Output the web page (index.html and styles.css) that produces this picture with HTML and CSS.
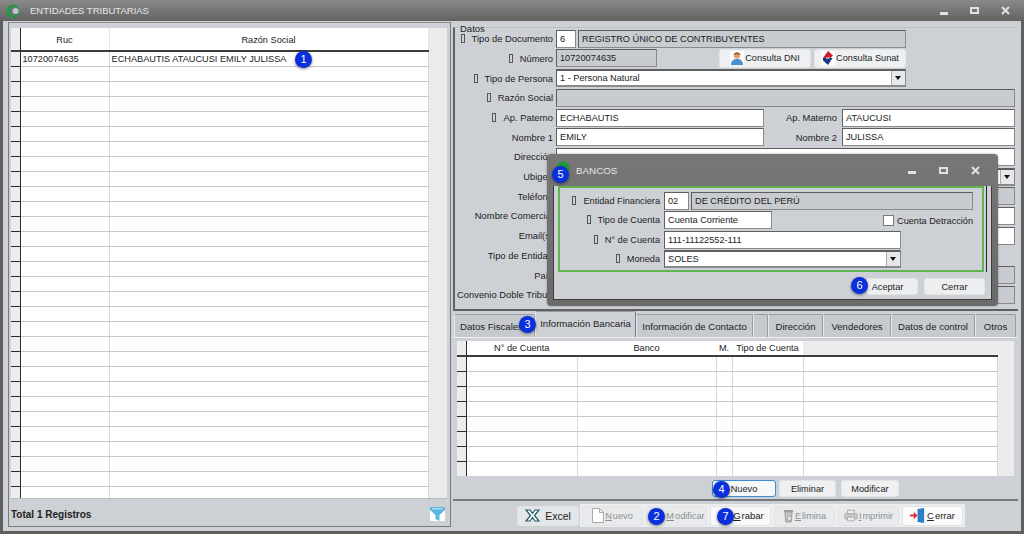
FILE: index.html
```html
<!DOCTYPE html>
<html lang="en">
<head>
    <meta charset="UTF-8">
    <meta name="viewport" content="width=device-width, initial-scale=1.0">
    <title>Entidades Tributarias</title>
    <link rel="stylesheet" href="styles.css">
</head>
<body>
    <div class="window">
        <div class="titlebar">
            <svg class="logo" width="14" height="14" viewBox="0 0 16 16"><circle cx="8" cy="8" r="7.500" fill="#1f9a3c"/><circle cx="9.500" cy="8" r="5" fill="#6d7378"/><circle cx="11" cy="8" r="3.500" fill="#bfc3c7"/></svg>
            <span class="title">ENTIDADES TRIBUTARIAS</span>
            <div class="win-controls">
                <span class="ctl-min"></span>
                <span class="ctl-max"></span>
                <svg width="9" height="9" viewBox="0 0 9 9"><path d="M1 1l7 7M8 1L1 8" stroke="#dfe1e3" stroke-width="2"/></svg>
            </div>
        </div>

        <div class="content">
            <div class="left-panel">
                <div class="grid left-grid">
                    <table>
                        <colgroup><col class="c-ind"><col class="c-ruc"><col class="c-razon"></colgroup>
                        <thead><tr><th></th><th>Ruc</th><th>Razón Social</th></tr></thead>
                        <tbody>
                            <tr><td></td><td>10720074635</td><td>ECHABAUTIS ATAUCUSI EMILY JULISSA</td></tr>
                            <tr><td></td><td></td><td></td></tr>
                            <tr><td></td><td></td><td></td></tr>
                            <tr><td></td><td></td><td></td></tr>
                            <tr><td></td><td></td><td></td></tr>
                            <tr><td></td><td></td><td></td></tr>
                            <tr><td></td><td></td><td></td></tr>
                            <tr><td></td><td></td><td></td></tr>
                            <tr><td></td><td></td><td></td></tr>
                            <tr><td></td><td></td><td></td></tr>
                            <tr><td></td><td></td><td></td></tr>
                            <tr><td></td><td></td><td></td></tr>
                            <tr><td></td><td></td><td></td></tr>
                            <tr><td></td><td></td><td></td></tr>
                            <tr><td></td><td></td><td></td></tr>
                            <tr><td></td><td></td><td></td></tr>
                            <tr><td></td><td></td><td></td></tr>
                            <tr><td></td><td></td><td></td></tr>
                            <tr><td></td><td></td><td></td></tr>
                            <tr><td></td><td></td><td></td></tr>
                            <tr><td></td><td></td><td></td></tr>
                            <tr><td></td><td></td><td></td></tr>
                            <tr><td></td><td></td><td></td></tr>
                            <tr><td></td><td></td><td></td></tr>
                            <tr><td></td><td></td><td></td></tr>
                            <tr><td></td><td></td><td></td></tr>
                            <tr><td></td><td></td><td></td></tr>
                            <tr><td></td><td></td><td></td></tr>
                            <tr><td></td><td></td><td></td></tr>
                            <tr><td></td><td></td><td></td></tr>
                        </tbody>
                    </table>
                </div>
                <div class="left-footer">
                    <span class="total">Total 1 Registros</span>
                    <svg width="15" height="14" viewBox="0 0 15 14"><rect width="15" height="14" fill="#fff"/><path d="M0 0h15v3L9.500 8v6l-4-2V8L0 3z" fill="#5cb6e0"/><path d="M2 1h11v1.500H2z" fill="#a6dcf3"/></svg>
                </div>
            </div>

            <div class="right-panel">
                <fieldset class="datos">
                    <legend>Datos</legend>
                    <div class="row">
                        <label><i class="mark"></i>Tipo de Documento</label>
                        <span class="input code">6</span>
                        <span class="input ro desc-doc">REGISTRO ÚNICO DE CONTRIBUYENTES</span>
                    </div>
                    <div class="row">
                        <label><i class="mark"></i>Número</label>
                        <span class="input ro num">10720074635</span>
                        <button class="btn btn-dni">
                            <svg width="14" height="14" viewBox="0 0 14 14"><rect width="14" height="14" fill="#fff"/><circle cx="7" cy="4.500" r="3.200" fill="#e0a070"/><path d="M3.500 4C4 .5 10 .5 10.500 4 8 3 6 3 3.500 4z" fill="#8a5a30"/><path d="M1 14c0-5 3-6 6-6s6 1 6 6z" fill="#4a90d0"/></svg>Consulta DNI</button>
                        <button class="btn btn-sunat">
                            <svg width="14" height="14" viewBox="0 0 14 14"><rect width="14" height="14" fill="#fff"/><path d="M7 0l5 4.500-2.500 2.500H2z" fill="#c8202a"/><path d="M2 7h9.500L7 14 2 9.500z" fill="#1c3a80"/><path d="M5 6.500h4l-1 1H5z" fill="#fff"/></svg>Consulta Sunat</button>
                    </div>
                    <div class="row">
                        <label><i class="mark"></i>Tipo de Persona</label>
                        <span class="input select desc-doc">1 - Persona Natural<b class="arrow"></b></span>
                    </div>
                    <div class="row">
                        <label><i class="mark"></i>Razón Social</label>
                        <span class="input ro grow"></span>
                    </div>
                    <div class="row">
                        <label><i class="mark"></i>Ap. Paterno</label>
                        <span class="input half">ECHABAUTIS</span>
                        <label class="label-2">Ap. Materno</label>
                        <span class="input grow">ATAUCUSI</span>
                    </div>
                    <div class="row">
                        <label>Nombre 1</label>
                        <span class="input half">EMILY</span>
                        <label class="label-2">Nombre 2</label>
                        <span class="input grow">JULISSA</span>
                    </div>
                    <div class="row">
                        <label>Dirección</label>
                        <span class="input grow"></span>
                    </div>
                    <div class="row">
                        <label>Ubigeo</label>
                        <span class="input select grow"><b class="arrow"></b></span>
                    </div>
                    <div class="row">
                        <label>Teléfono</label>
                        <span class="input ro grow"></span>
                    </div>
                    <div class="row">
                        <label>Nombre Comercial</label>
                        <span class="input grow"></span>
                    </div>
                    <div class="row">
                        <label>Email(s)</label>
                        <span class="input grow"></span>
                    </div>
                    <div class="row">
                        <label>Tipo de Entidad</label>
                    </div>
                    <div class="row">
                        <label>País</label>
                        <span class="input ro grow"></span>
                    </div>
                    <div class="row">
                        <label class="label-long">Convenio Doble Tributación</label>
                        <span class="input ro grow"></span>
                    </div>
                </fieldset>

                <div class="tabs">
                    <span class="tab tab-fiscal">Datos Fiscales</span>
                    <span class="tab active tab-banco">Información Bancaria</span>
                    <span class="tab tab-contacto">Información de Contacto</span>
                    <span class="tab tab-blank"></span>
                    <span class="tab tab-dir">Dirección</span>
                    <span class="tab tab-vend">Vendedores</span>
                    <span class="tab tab-control">Datos de control</span>
                    <span class="tab tab-otros">Otros</span>
                </div>
                <div class="tab-panel">
                    <div class="grid bank-grid">
                        <table>
                            <colgroup><col class="b-ind"><col class="b-cuenta"><col class="b-banco"><col class="b-m"><col class="b-tipo"><col></colgroup>
                            <thead><tr><th></th><th>N° de Cuenta</th><th>Banco</th><th>M.</th><th>Tipo de Cuenta</th><th class="th-empty"></th></tr></thead>
                            <tbody>
                                <tr><td></td><td></td><td></td><td></td><td></td><td></td></tr>
                                <tr><td></td><td></td><td></td><td></td><td></td><td></td></tr>
                                <tr><td></td><td></td><td></td><td></td><td></td><td></td></tr>
                                <tr><td></td><td></td><td></td><td></td><td></td><td></td></tr>
                                <tr><td></td><td></td><td></td><td></td><td></td><td></td></tr>
                                <tr><td></td><td></td><td></td><td></td><td></td><td></td></tr>
                                <tr><td></td><td></td><td></td><td></td><td></td><td></td></tr>
                                <tr><td></td><td></td><td></td><td></td><td></td><td></td></tr>
                            </tbody>
                        </table>
                    </div>
                </div>
                <div class="bank-actions">
                    <button class="btn btn-focus">Nuevo</button>
                    <button class="btn">Eliminar</button>
                    <button class="btn btn-mod">Modificar</button>
                </div>
                <div class="toolbar">
                    <button class="btn tool tool-excel">
                        <svg width="15" height="13" viewBox="0 0 15 13"><path d="M1 1h4l2.500 3.500L10 1h4L9.500 6.500 14 12h-4L7.500 8.500 5 12H1l4.500-5.500z" fill="#fff" stroke="#1c5a6a" stroke-width="1.200"/></svg>Excel</button>
                    <div class="tool-group">
                        <button class="btn tool off">
                            <svg width="12" height="15" viewBox="0 0 12 15"><path d="M.5.5h7l4 4v10H.5z" fill="#fff" stroke="#a8a8a8"/><path d="M7.500.5v4h4" fill="none" stroke="#a8a8a8"/></svg><u>N</u>uevo</button>
                        <button class="btn tool off tool-mod"><u>M</u>odificar</button>
                        <button class="btn tool tool-grabar"><u>G</u>rabar</button>
                        <button class="btn tool off">
                            <svg width="11" height="14" viewBox="0 0 12 15"><path d="M2 3h8l-1 11H3z" fill="#c4c4c4" stroke="#999"/><path d="M1 2h10" stroke="#999" stroke-width="2"/><circle cx="7" cy="10" r="2.500" fill="#e8e8e8" stroke="#999"/></svg><u>E</u>limina</button>
                        <button class="btn tool off">
                            <svg width="14" height="13" viewBox="0 0 16 14"><path d="M4 1h8v4H4z" fill="#eee" stroke="#aaa"/><path d="M1 5h14v6H1z" fill="#c8c8c8" stroke="#aaa"/><path d="M4 9h8v4H4z" fill="#eee" stroke="#aaa"/></svg><u>I</u>mprimir</button>
                        <button class="btn tool tool-close">
                            <svg width="16" height="15" viewBox="0 0 17 16"><path d="M8 1l7-1v16l-7-1z" fill="#2a7fc8"/><path d="M0 7h4V4l4 4-4 4V9H0z" fill="#e0303a"/></svg><u>C</u>errar</button>
                    </div>
                </div>
            </div>
        </div>
    </div>

    <!-- ventana flotante -->
    <div class="dialog">
        <div class="dialog-title">
            <svg class="dialog-logo" width="14" height="14" viewBox="0 0 16 16"><circle cx="8" cy="8" r="7.500" fill="#1f9a3c"/></svg>
            <span class="title">BANCOS</span>
            <div class="win-controls">
                <span class="ctl-min"></span>
                <span class="ctl-max"></span>
                <svg width="9" height="9" viewBox="0 0 9 9"><path d="M1 1l7 7M8 1L1 8" stroke="#dfe1e3" stroke-width="2"/></svg>
            </div>
        </div>
        <div class="dialog-body">
            <div class="dialog-form">
                <div class="drow">
                    <label><i class="mark"></i>Entidad Financiera</label>
                    <span class="input dcode">02</span>
                    <span class="input ro ddesc">DE CRÉDITO DEL PERÚ</span>
                </div>
                <div class="drow">
                    <label><i class="mark"></i>Tipo de Cuenta</label>
                    <span class="input dtipo">Cuenta Corriente</span>
                    <span class="check"><i class="box"></i>Cuenta Detracción</span>
                </div>
                <div class="drow">
                    <label><i class="mark"></i>N° de Cuenta</label>
                    <span class="input dwide">111-11122552-111</span>
                </div>
                <div class="drow">
                    <label><i class="mark"></i>Moneda</label>
                    <span class="input select dwide">SOLES<b class="arrow"></b></span>
                </div>
            </div>
            <div class="dialog-actions">
                <button class="btn btn-acc">Aceptar</button>
                <button class="btn btn-acc2">Cerrar</button>
            </div>
        </div>
    </div>

    <span class="badge b1">1</span>
    <span class="badge b2">2</span>
    <span class="badge b3">3</span>
    <span class="badge b4">4</span>
    <span class="badge b5">5</span>
    <span class="badge b6">6</span>
    <span class="badge b7">7</span>
</body>
</html>
```

FILE: styles.css
```css
* {
    box-sizing: border-box;
}
body {
    margin: 0;
    width: 1024px;
    height: 534px;
    overflow: hidden;
    background: #5f5f5f;
    font-family: "Liberation Sans", Arial, sans-serif;
    font-size: 9.2px;
    color: #222;
}
.window {
    display: flex;
    flex-direction: column;
    height: 100%;
}
.titlebar {
    display: flex;
    align-items: center;
    height: 22px;
    padding: 0 0 0 6px;
    background: linear-gradient(#8a8a8a, #626262);
}
.title {
    margin-left: 10px;
    font-size: 9.500px;
    color: #e4e6e8;
}
.win-controls {
    display: flex;
    align-items: center;
    gap: 23px;
    margin-left: auto;
    margin-right: 13px;
}
.titlebar .win-controls {
    gap: 22px;
    margin-right: 14px;
}
.ctl-min {
    width: 8px;
    height: 3px;
    margin-top: 5px;
    background: #dfe1e3;
}
.ctl-max {
    width: 9px;
    height: 7px;
    border: 2px solid #dfe1e3;
}
.content {
    flex: 1;
    display: flex;
    gap: 2px;
    margin: 0 3px 3px;
    padding: 1px 3px 4px 5px;
    background: #cdd0d5;
}

/* grids */
.grid table {
    border-collapse: collapse;
    table-layout: fixed;
}
.grid th {
    background: #fff;
    font-weight: normal;
    font-size: 9.2px;
    padding: 2px 0 0;
    border-bottom: 2px solid #3c3c3c;
    border-right: 1px solid #e6e6e6;
}
.grid th:first-child,
.grid td:first-child {
    background: #ededed;
    border-right: 1px solid #2b2b2b;
}
.grid td {
    padding: 0 0 0 2px;
    background: #fff;
    border-bottom: 1px solid #c8c8c8;
    border-right: 1px solid #d8d8d8;
    white-space: nowrap;
    overflow: hidden;
}
.grid td:first-child {
    border-bottom: 1px solid #2b2b2b;
}
.left-panel {
    display: flex;
    flex-direction: column;
    width: 443px;
    padding: 5px 3px 0 2px;
    border: 1px solid #77797c;
    border-top: 1px solid #8c8e91;
}
.left-grid {
    height: 471px;
    background: #ebebeb;
    border-bottom: 1px solid #bbb;
    overflow: hidden;
}
.left-grid table {
    width: 417px;
}
.left-grid th {
    height: 23px;
}
.left-grid td {
    height: 15px;
}
.c-ind {
    width: 9px;
}
.c-ruc {
    width: 89px;
}
.c-razon {
    width: 319px;
}
.left-footer {
    flex: 1;
    display: flex;
    align-items: center;
    justify-content: space-between;
    padding: 3px 2px 0 0;
}
.total {
    font-size: 10px;
    font-weight: bold;
}

/* datos */
.right-panel {
    flex: 1;
    min-width: 0;
    display: flex;
    flex-direction: column;
}
.datos {
    margin: 0;
    padding: 0 3px 0 2px;
    height: 289px;
    border: 2px solid #5f6165;
    border-width: 1px 0 2px 2px;
    border-top-color: #bcbfc3;
}
.datos legend {
    margin: 0 0 -3px 2px;
    padding: 3px 1px 0;
    font-size: 9.500px;
    line-height: 8px;
}
.row {
    display: flex;
    align-items: center;
    height: 17.500px;
    margin-bottom: 2.200px;
    font-size: 9.400px;
}
.row .input {
    font-size: 9.2px;
}
.row label {
    width: 96px;
    flex: none;
    margin-right: 3px;
    text-align: right;
    white-space: nowrap;
}
.row .label-2 {
    width: 73px;
    margin-right: 5px;
}
.row .label-long {
    text-align: left;
}
.mark {
    display: inline-block;
    width: 4px;
    height: 9px;
    margin-right: 7px;
    border: 1px solid #555;
    vertical-align: -1px;
}
.input {
    display: flex;
    align-items: center;
    height: 18px;
    padding-left: 3px;
    background: #fff;
    border: 1px solid #5e5e5e;
    border-right-color: #8a8a8a;
    border-bottom-color: #8a8a8a;
    white-space: nowrap;
}
.ro {
    background: #c8ccd1;
}
.grow {
    flex: 1;
}
.code {
    width: 20px;
}
.desc-doc {
    width: 350px;
}
.code + .desc-doc {
    width: 328px;
    margin-left: 2px;
}
.num {
    width: 101px;
}
.half {
    width: 208px;
}
.select {
    position: relative;
    border-width: 2px 1px;
}
.arrow {
    position: absolute;
    right: 0;
    top: 0;
    bottom: 0;
    width: 14px;
    background: #e6e8ea;
    border-left: 1px solid #aaa;
}
.arrow::after {
    content: "";
    position: absolute;
    left: 3px;
    top: 5px;
    border: 3.500px solid transparent;
    border-top: 4px solid #111;
    border-bottom: 0;
}

/* botones */
.btn {
    display: flex;
    align-items: center;
    justify-content: center;
    gap: 1px;
    height: 17px;
    padding: 0;
    background: #eff0f2;
    border: 1px solid #e2e4e6;
    border-radius: 3px;
    font-family: inherit;
    font-size: 9.2px;
    color: #222;
}
.btn-dni {
    width: 92px;
    margin-left: 62px;
    height: 19px;
}
.btn-sunat {
    width: 92px;
    margin-left: 3px;
    height: 19px;
}

/* tabs */
.tabs {
    display: flex;
    align-items: flex-end;
    height: 26px;
    padding-left: 1px;
    font-size: 9.600px;
}
.tab {
    display: flex;
    align-items: center;
    justify-content: center;
    height: 23px;
    background: #c6cacf;
    border: 1px solid #9a9ca0;
    border-bottom: 0;
    border-left-color: #e6e8ea;
    border-radius: 2px 2px 0 0;
    white-space: nowrap;
}
.tab.active {
    height: 26px;
    padding-bottom: 3px;
    background: #cdd0d5;
    border-right: 1px solid #77797c;
}
.tab-fiscal {
    width: 81px;
    justify-content: flex-start;
    padding-left: 5px;
}
.tab-banco {
    width: 101px;
}
.tab-contacto {
    width: 117px;
}
.tab-blank {
    width: 15px;
}
.tab-dir {
    width: 55px;
}
.tab-vend {
    width: 68px;
}
.tab-control {
    width: 84px;
}
.tab-otros {
    width: 41px;
}
.tab-panel {
    height: 138px;
    padding: 3px 4px 0;
    background: #cdd0d5;
    border-top: 1px solid #eef0f2;
}
.bank-grid {
    height: 135px;
    background: #ececec;
    overflow: hidden;
}
.bank-grid table {
    width: 541px;
}
.bank-grid th {
    height: 15px;
    padding: 0;
    border-right: 0;
}
.bank-grid th.th-empty {
    background: #ececec;
}
.bank-grid td {
    height: 15px;
}
.b-ind {
    width: 9px;
}
.b-cuenta {
    width: 111px;
}
.b-banco {
    width: 139px;
}
.b-m {
    width: 16px;
}
.b-tipo {
    width: 71px;
}
.bank-actions {
    display: flex;
    gap: 3px;
    height: 26px;
    padding: 5px 0 0 259px;
    border-bottom: 2px solid #77797c;
}
.bank-actions .btn {
    width: 57px;
}
.bank-actions .btn-focus {
    width: 64px;
    background: #f6f8fa;
    border: 1px solid #3a8cd8;
}
.bank-actions .btn-mod {
    width: 58px;
    margin-left: 2px;
}
.toolbar {
    display: flex;
    align-items: center;
    height: 26px;
    padding: 3px 0 0 64px;
}
.tool {
    width: 61px;
    height: 20px;
}
.tool-excel {
    width: 62px;
    gap: 5px;
    font-size: 10.500px;
    margin-right: 1px;
    background: #e4e6e9;
}
.tool-group {
    display: flex;
    gap: 3px;
    height: 23px;
    align-items: center;
    padding: 0 2px;
    background: #eceef0;
}
.tool.off {
    color: #8d8f92;
    background: #e8eaec;
}
.tool u {
    text-underline-offset: 1px;
}
.tool-grabar {
    background: #f8f8f8;
    font-size: 9.500px;
    padding-left: 16px;
}
.tool-mod {
    padding-left: 18px;
}
.tool-close {
    background: #fbfbfb;
    font-size: 9.500px;
}

/* dialogo */
.dialog {
    position: absolute;
    left: 547px;
    top: 154px;
    width: 451px;
    height: 152px;
    padding: 0 6px 6px;
    background: linear-gradient(#777, #6a6a6a);
    border-radius: 4px;
    display: flex;
    flex-direction: column;
    box-shadow: 0 0 2px rgba(0, 0, 0, 0.4);
}
.dialog-title {
    display: flex;
    align-items: center;
    height: 32px;
    flex: none;
}
.dialog-logo {
    margin: -4px 0 0 3px;
}
.dialog-title .title {
    margin-left: 6px;
    font-size: 9.800px;
}
.dialog-title .win-controls {
    margin-right: 12px;
}
.dialog-body {
    flex: 1;
    padding: 0 4px;
    background: #cdd0d5;
    border: 1px solid #3c3c3c;
    border-top: 0;
}
.dialog-form {
    width: 426px;
    height: 86px;
    padding: 4px 0 0;
    border: 2px solid #5fb550;
    box-shadow: 2px 0 0 #cdd0d5, 3px 0 0 #222;
}
.drow {
    position: relative;
    display: flex;
    align-items: center;
    height: 18px;
    margin-bottom: 1.300px;
}
.drow label {
    width: 100px;
    margin-right: 4px;
    flex: none;
    text-align: right;
    white-space: nowrap;
}
.drow .input {
    height: 18px;
}
.dcode {
    width: 25px;
}
.ddesc {
    width: 282px;
    margin-left: 2px;
    padding-left: 3px;
}
.dtipo {
    width: 108px;
}
.dwide {
    width: 237px;
}
.check {
    position: absolute;
    left: 323px;
    top: 4px;
    display: flex;
    align-items: center;
    gap: 3px;
    white-space: nowrap;
}
.box {
    width: 11px;
    height: 11px;
    background: #fff;
    border: 1px solid #777;
}
.dialog-actions {
    display: flex;
    justify-content: flex-end;
    gap: 6px;
    padding: 6px 2px 0;
}
.dialog-actions .btn {
    width: 61px;
    height: 17px;
    background: #eceef0;
}
.dialog-actions .btn-acc {
    width: 52px;
    padding-right: 9px;
}

/* marcadores azules */
.badge {
    position: absolute;
    width: 17px;
    height: 17px;
    border-radius: 50%;
    background: #0a2fdc;
    color: #fff;
    font-size: 11px;
    line-height: 17px;
    text-align: center;
    box-shadow: 0 1px 3px rgba(0, 0, 0, 0.5);
}
.b1 {
    left: 295px;
    top: 51px;
}
.b2 {
    left: 648px;
    top: 508px;
}
.b3 {
    left: 519px;
    top: 316px;
}
.b4 {
    left: 713px;
    top: 481px;
}
.b5 {
    left: 552px;
    top: 166px;
}
.b6 {
    left: 851px;
    top: 277px;
}
.b7 {
    left: 717px;
    top: 508px;
}
```
